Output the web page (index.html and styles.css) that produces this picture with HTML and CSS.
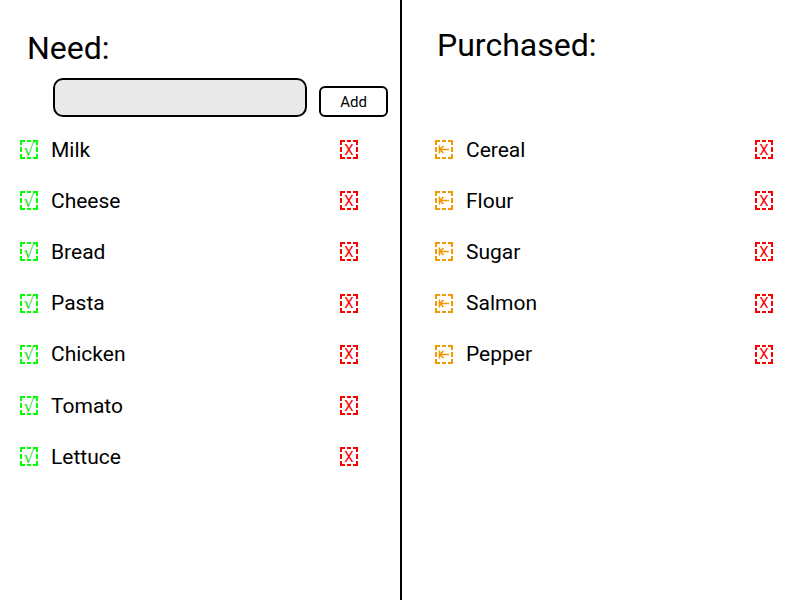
FILE: index.html
```html
<!DOCTYPE html>
<html>
<head>
<meta charset="utf-8">
<link rel="stylesheet" href="styles.css">
</head>
<body>
<div class="app">
  <section class="panel need">
    <h2 class="title">Need:</h2>
    <div class="add-row">
      <input class="add-input" type="text">
      <button class="add-btn">Add</button>
    </div>
    <ul class="list">
      <li class="row"><span class="ico ok">√</span><span class="name">Milk</span><span class="ico del">X</span></li>
      <li class="row"><span class="ico ok">√</span><span class="name">Cheese</span><span class="ico del">X</span></li>
      <li class="row"><span class="ico ok">√</span><span class="name">Bread</span><span class="ico del">X</span></li>
      <li class="row"><span class="ico ok">√</span><span class="name">Pasta</span><span class="ico del">X</span></li>
      <li class="row"><span class="ico ok">√</span><span class="name">Chicken</span><span class="ico del">X</span></li>
      <li class="row"><span class="ico ok">√</span><span class="name">Tomato</span><span class="ico del">X</span></li>
      <li class="row"><span class="ico ok">√</span><span class="name">Lettuce</span><span class="ico del">X</span></li>
    </ul>
  </section>
  <section class="panel bought">
    <h2 class="title">Purchased:</h2>
    <ul class="list">
      <li class="row"><span class="ico back"><svg class="arrow" viewBox="0 0 14 15"><path d="M2.5 3.5V11.5M3 7.5H12M3 7.5L6.5 4M3 7.5L6.5 11"/></svg></span><span class="name">Cereal</span><span class="ico del">X</span></li>
      <li class="row"><span class="ico back"><svg class="arrow" viewBox="0 0 14 15"><path d="M2.5 3.5V11.5M3 7.5H12M3 7.5L6.5 4M3 7.5L6.5 11"/></svg></span><span class="name">Flour</span><span class="ico del">X</span></li>
      <li class="row"><span class="ico back"><svg class="arrow" viewBox="0 0 14 15"><path d="M2.5 3.5V11.5M3 7.5H12M3 7.5L6.5 4M3 7.5L6.5 11"/></svg></span><span class="name">Sugar</span><span class="ico del">X</span></li>
      <li class="row"><span class="ico back"><svg class="arrow" viewBox="0 0 14 15"><path d="M2.5 3.5V11.5M3 7.5H12M3 7.5L6.5 4M3 7.5L6.5 11"/></svg></span><span class="name">Salmon</span><span class="ico del">X</span></li>
      <li class="row"><span class="ico back"><svg class="arrow" viewBox="0 0 14 15"><path d="M2.5 3.5V11.5M3 7.5H12M3 7.5L6.5 4M3 7.5L6.5 11"/></svg></span><span class="name">Pepper</span><span class="ico del">X</span></li>
    </ul>
  </section>
</div>
</body>
</html>
```
FILE: styles.css
```css
html, body {
  margin: 0;
  padding: 0;
  background: #fff;
}
body {
  font-family: Roboto, "Liberation Sans", sans-serif;
  color: #000;
}
.app {
  display: flex;
  height: 600px;
}
.panel {
  display: flex;
  flex-direction: column;
}
.need {
  width: 400px;
  border-right: 2px solid #000;
}
.bought {
  flex: 1;
}
.title {
  margin: 0;
  font-size: 32px;
  font-weight: 400;
  line-height: 32px;
}
.need .title {
  padding: 32px 0 0 27px;
}
.bought .title {
  padding: 29px 0 0 35px;
}
.add-row {
  display: flex;
  align-items: flex-end;
  margin: 14px 0 0 53px;
}
.add-input {
  box-sizing: border-box;
  width: 254px;
  height: 39px;
  border: 2px solid #000;
  border-radius: 10px;
  background: #e9e9e9;
  margin: 0;
  padding: 0 8px;
  outline: none;
}
.add-btn {
  box-sizing: border-box;
  width: 69px;
  height: 31px;
  margin: 0 0 0 12px;
  border: 2px solid #000;
  border-radius: 6px;
  background: #fff;
  font-family: Roboto, sans-serif;
  font-size: 15px;
  color: #000;
  padding: 0;
}
.list {
  list-style: none;
  margin: 0;
  padding: 0;
  width: 338px;
}
.need .list {
  margin: 7px 0 0 20px;
}
.bought .list {
  margin: 63px 0 0 33px;
}
.row {
  display: flex;
  align-items: center;
  height: 51.2px;
}
.ico {
  --c: #000;
  box-sizing: border-box;
  flex: none;
  width: 18px;
  height: 19px;
  display: flex;
  align-items: center;
  justify-content: center;
  line-height: 1;
  background:
    repeating-linear-gradient(90deg, var(--c) 0 4.67px, transparent 4.67px 6.67px) top / 100% 2px no-repeat,
    repeating-linear-gradient(90deg, var(--c) 0 4.67px, transparent 4.67px 6.67px) bottom / 100% 2px no-repeat,
    repeating-linear-gradient(180deg, var(--c) 0 5px, transparent 5px 7px) left / 2px 100% no-repeat,
    repeating-linear-gradient(180deg, var(--c) 0 5px, transparent 5px 7px) right / 2px 100% no-repeat;
}
.ok {
  --c: #00ff00;
  color: #22dd22;
  font-family: "DejaVu Sans", sans-serif;
  font-size: 17px;
  padding-top: 1px;
}
.del {
  --c: #ff0000;
  color: #ff0000;
  margin-left: auto;
  font-family: Roboto, sans-serif;
  font-size: 15px;
  padding-top: 1px;
}
.back {
  --c: #f39800;
  color: #f39800;
}
.arrow {
  width: 14px;
  height: 15px;
  fill: none;
  stroke: currentColor;
  stroke-width: 1.6;
}
.name {
  margin-left: 13px;
  font-size: 21px;
}
```
